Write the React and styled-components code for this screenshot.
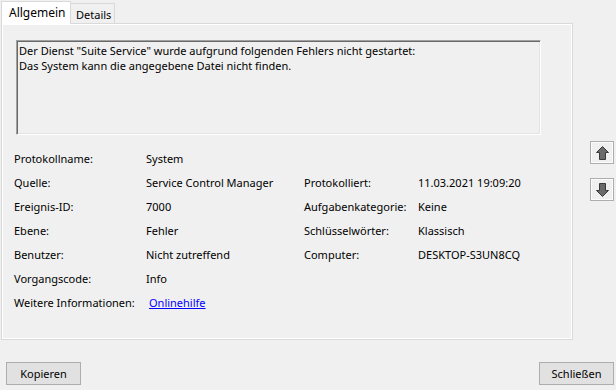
import React from "react";
import styled, { createGlobalStyle } from "styled-components";

const GlobalStyle = createGlobalStyle`
  html, body {
    margin: 0;
    padding: 0;
    background: #f0f0f0;
  }
  body {
    width: 616px;
    height: 390px;
    overflow: hidden;
    font-family: "Noto Sans", "Open Sans", sans-serif;
    font-size: 11px;
    color: #000;
  }
`;

const rows = [
  ["Protokollname:", "System"],
  ["Quelle:", "Service Control Manager", "Protokolliert:", "11.03.2021 19:09:20"],
  ["Ereignis-ID:", "7000", "Aufgabenkategorie:", "Keine"],
  ["Ebene:", "Fehler", "Schlüsselwörter:", "Klassisch"],
  ["Benutzer:", "Nicht zutreffend", "Computer:", "DESKTOP-S3UN8CQ"],
  ["Vorgangscode:", "Info"],
];

export default function App() {
  return (
    <Dialog>
      <GlobalStyle />
      <Main>
        <LeftCol>
          <TabStrip>
            <Tab $active>Allgemein</Tab>
            <Tab>Details</Tab>
          </TabStrip>
          <Panel>
            <MessageBox>
              Der Dienst "Suite Service" wurde aufgrund folgenden Fehlers nicht gestartet:
              <br />
              Das System kann die angegebene Datei nicht finden.
            </MessageBox>
            <InfoGrid>
              {rows.map((r, i) => (
                <React.Fragment key={i}>
                  <Cell>{r[0]}</Cell>
                  <Cell>{r[1]}</Cell>
                  <Cell>{r[2] || ""}</Cell>
                  <Cell>{r[3] || ""}</Cell>
                </React.Fragment>
              ))}
              <Cell>Weitere Informationen:</Cell>
              <Cell $span>
                <HelpLink href="#">Onlinehilfe</HelpLink>
              </Cell>
            </InfoGrid>
          </Panel>
        </LeftCol>
        <SideCol>
          <ArrowButton title="Vorheriges Ereignis">
            <Arrow />
          </ArrowButton>
          <ArrowButton title="Nächstes Ereignis">
            <Arrow $down />
          </ArrowButton>
        </SideCol>
      </Main>
      <Footer>
        <PushButton>Kopieren</PushButton>
        <PushButton>Schließen</PushButton>
      </Footer>
    </Dialog>
  );
}

function Arrow({ $down }) {
  return (
    <svg width="13" height="14" viewBox="0 0 13 14" style={{ transform: $down ? "rotate(180deg)" : "none" }}>
      <polygon
        points="6.5,0.5 12.5,6.5 9.5,6.5 9.5,13.5 3.5,13.5 3.5,6.5 0.5,6.5"
        fill="#6a6a6a"
        stroke="#3a3a3a"
        strokeWidth="1"
        strokeLinejoin="miter"
      />
    </svg>
  );
}

const Dialog = styled.div`
  width: 616px;
  height: 390px;
  display: flex;
  flex-direction: column;
`;

const Main = styled.div`
  display: flex;
`;

const LeftCol = styled.div`
  display: flex;
  flex-direction: column;
  padding-left: 1px;
`;

const TabStrip = styled.div`
  display: flex;
  align-items: flex-end;
  height: 23px;
`;

const Tab = styled.div`
  position: relative;
  box-sizing: border-box;
  border: 1px solid #d9d9d9;
  border-bottom: none;
  display: flex;
  align-items: center;
  background: ${(p) => (p.$active ? "#fff" : "#f0f0f0")};
  height: ${(p) => (p.$active ? "23px" : "20px")};
  margin-bottom: ${(p) => (p.$active ? "-1px" : "0")};
  margin-left: ${(p) => (p.$active ? "0" : "-1px")};
  padding: ${(p) => (p.$active ? "0 7px 1px 7px" : "1px 4px 0 5px")};
  width: ${(p) => (p.$active ? "70px" : "45px")};
  z-index: ${(p) => (p.$active ? 1 : 0)};
  font-size: ${(p) => (p.$active ? "12px" : "11px")};
`;

const Panel = styled.div`
  box-sizing: border-box;
  width: 572px;
  height: 317px;
  border: 1px solid #d9d9d9;
  box-shadow: inset 0 0 0 1px #fff;
  padding: 16px 0 0 12px;
`;

const MessageBox = styled.div`
  box-sizing: border-box;
  margin-left: 2px;
  width: 525px;
  height: 95px;
  border-top: 1px solid #a0a0a0;
  border-left: 1px solid #a0a0a0;
  border-right: 1px solid #fff;
  border-bottom: 1px solid #fff;
  box-shadow: inset 1px 1px 0 #696969, inset -1px -1px 0 #e3e3e3;
  padding: 2px 4px 0 2px;
  line-height: 15px;
  white-space: nowrap;
`;

const InfoGrid = styled.div`
  display: grid;
  grid-template-columns: 132px 158px 114px 1fr;
  grid-auto-rows: 24.1px;
  margin-top: 11px;
`;

const Cell = styled.div`
  display: flex;
  align-items: center;
  white-space: nowrap;
  grid-column: ${(p) => (p.$span ? "2 / span 3" : "auto")};
`;

const HelpLink = styled.a`
  color: #0000ff;
  text-decoration: underline;
  margin-left: 3px;
`;

const SideCol = styled.div`
  display: flex;
  flex-direction: column;
  gap: 14px;
  padding-top: 141px;
  margin-left: 17px;
`;

const ArrowButton = styled.button`
  box-sizing: border-box;
  width: 24px;
  height: 23px;
  padding: 0;
  display: flex;
  align-items: center;
  justify-content: center;
  background: #f0f0f0;
  border: 1px solid #adadad;
  box-shadow: inset 0 0 0 1px #fcfcfc;
`;

const Footer = styled.div`
  display: flex;
  justify-content: space-between;
  margin-top: 22px;
  padding: 0 2px 0 6px;
`;

const PushButton = styled.button`
  box-sizing: border-box;
  width: 75px;
  height: 23px;
  padding: 0;
  background: #e1e1e1;
  border: 1px solid #adadad;
  font-family: "Noto Sans", "Open Sans", sans-serif;
  font-size: 11px;
  color: #000;
`;
